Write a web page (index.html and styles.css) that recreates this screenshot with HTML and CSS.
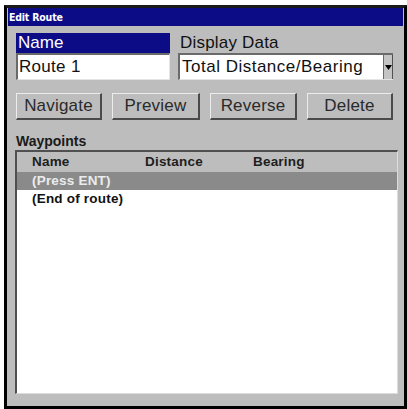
FILE: index.html
```html
<!DOCTYPE html>
<html>
<head>
<meta charset="utf-8">
<link rel="stylesheet" href="styles.css">
</head>
<body>
<div class="frame">
  <div class="titlebar">Edit Route</div>
  <div class="content">
    <div class="fields">
      <div class="label label-selected">Name</div>
      <div class="label label-wide">Display Data</div>
      <div class="input">Route 1</div>
      <div class="select">
        <span class="select-text">Total Distance/Bearing</span>
        <span class="select-arrow"><svg width="7" height="5" viewBox="0 0 7 5"><path d="M0 0H7L3.5 5Z" fill="#000"/></svg></span>
      </div>
    </div>
    <div class="buttons">
      <div class="btn btn-nav">Navigate</div>
      <div class="btn btn-prev">Preview</div>
      <div class="btn btn-rev">Reverse</div>
      <div class="btn btn-del">Delete</div>
    </div>
    <div class="section-label">Waypoints</div>
    <div class="list">
      <div class="row row-head">
        <span class="c1">Name</span><span class="c2">Distance</span><span class="c3">Bearing</span>
      </div>
      <div class="row row-sel"><span class="c1">(Press ENT)</span></div>
      <div class="row"><span class="c1">(End of route)</span></div>
    </div>
  </div>
</div>
</body>
</html>
```

FILE: styles.css
```css
html, body {
  margin: 0;
  padding: 0;
  background: #ffffff;
}
body {
  width: 407px;
  height: 409px;
  overflow: hidden;
  font-family: "Liberation Sans", Arial, sans-serif;
}
.frame {
  box-sizing: border-box;
  margin: 5px 0 0 4px;
  width: 403px;
  height: 404px;
  border: 3px solid #000;
  border-top-color: #1a1a1a;
  background: #bdbdbd;
  display: flex;
  flex-direction: column;
}
.titlebar {
  height: 18px;
  margin: 0 1px 0 1px;
  background: #0c0c86;
  color: #fff;
  font-family: "DejaVu Sans Condensed", "DejaVu Sans", sans-serif;
  font-weight: bold;
  font-size: 10.5px;
  line-height: 18px;
  padding-left: 1px;
  letter-spacing: -0.2px;
}
.content {
  flex: 1;
  display: flex;
  flex-direction: column;
  padding: 7px 8px 12px 8px;
}
.fields {
  display: grid;
  grid-template-columns: 154px 215px;
  grid-template-rows: 20px 27px;
  column-gap: 8px;
  margin-left: 1px;
}
.label {
  font-size: 17px;
  line-height: 20px;
  color: #111;
  padding-left: 2px;
}
.label-wide {
  letter-spacing: 0.2px;
}
.label-selected {
  background: #0c0c86;
  color: #fff;
}
.input, .select {
  box-sizing: border-box;
  background: #fff;
  border-top: 2px solid #6a6a6a;
  border-left: 2px solid #6a6a6a;
  border-right: 1px solid #e4e4e4;
  border-bottom: 1px solid #e4e4e4;
  font-size: 17px;
  line-height: 24px;
  color: #111;
  padding-left: 1px;
}
.input {
  letter-spacing: 0.3px;
}
.select {
  display: flex;
  padding-left: 2px;
  border-right: none;
}
.select-text {
  flex: 1;
  letter-spacing: 0.5px;
}
.select-arrow {
  width: 10px;
  box-sizing: border-box;
  background: #c4c4c4;
  border-left: 1px solid #6a6a6a;
  border-right: 1px solid #505050;
  display: flex;
  align-items: center;
  justify-content: center;
}
.buttons {
  display: flex;
  gap: 10px;
  margin-top: 13px;
  margin-left: 1px;
}
.btn {
  box-sizing: border-box;
  height: 27px;
  background: #bdbdbd;
  border-top: 1px solid #ececec;
  border-left: 1px solid #ececec;
  border-right: 2px solid #4a4a4a;
  border-bottom: 2px solid #4a4a4a;
  font-size: 17px;
  line-height: 24px;
  color: #2a2a2a;
  text-align: center;
  letter-spacing: 0.2px;
}
.btn-nav { width: 86px; }
.btn-prev { width: 88px; }
.btn-rev { width: 87px; }
.btn-del { width: 86px; }
.section-label {
  margin-top: 13px;
  margin-left: 1px;
  font-weight: bold;
  font-size: 14px;
  line-height: 17px;
  color: #1a1a1a;
}
.list {
  flex: 1;
  box-sizing: border-box;
  margin-right: -2px;
  background: #fff;
  border-top: 2px solid #505050;
  border-left: 2px solid #505050;
  border-right: 1px solid #dcdcdc;
  border-bottom: 1px solid #dcdcdc;
}
.row {
  display: grid;
  grid-template-columns: 113px 108px 1fr;
  padding-left: 15px;
  height: 18px;
  font-weight: bold;
  font-size: 13.5px;
  line-height: 18px;
  color: #111;
  letter-spacing: 0.2px;
}
.row-head {
  height: 20px;
  line-height: 19px;
  background: #bdbdbd;
  color: #1e1e1e;
}
.row-sel {
  background: #8a8a8a;
  color: #ececec;
}
```
